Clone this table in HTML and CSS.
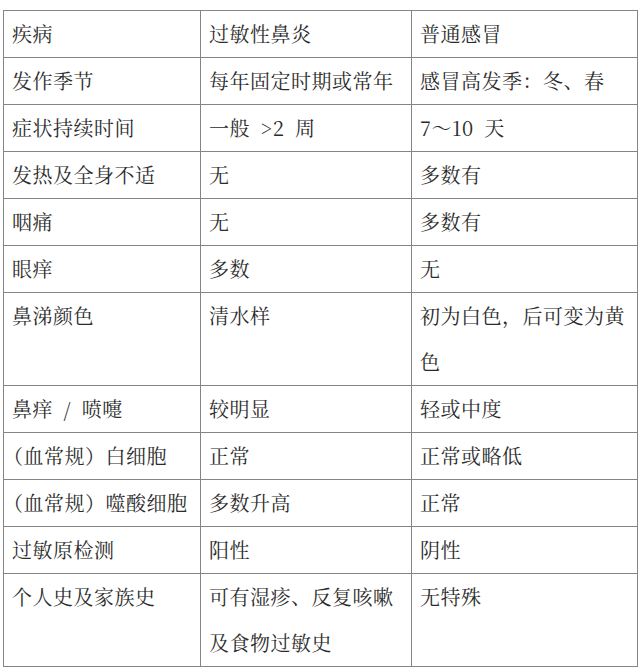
FILE: index.html
```html
<!DOCTYPE html>
<html lang="zh-CN">
<head>
<meta charset="utf-8">
<title>过敏性鼻炎与普通感冒</title>
<link rel="stylesheet" href="styles.css">
</head>
<body>
<table class="cmp">
  <colgroup>
    <col class="c1"><col class="c2"><col class="c3">
  </colgroup>
  <tbody>
    <tr><td>疾病</td><td>过敏性鼻炎</td><td>普通感冒</td></tr>
    <tr><td>发作季节</td><td>每年固定时期或常年</td><td>感冒高发季：冬、春</td></tr>
    <tr><td>症状持续时间</td><td>一般 &gt;2 周</td><td>7～10 天</td></tr>
    <tr><td>发热及全身不适</td><td>无</td><td>多数有</td></tr>
    <tr><td>咽痛</td><td>无</td><td>多数有</td></tr>
    <tr><td>眼痒</td><td>多数</td><td>无</td></tr>
    <tr><td>鼻涕颜色</td><td>清水样</td><td>初为白色，后可变为黄<br>色</td></tr>
    <tr><td>鼻痒 / 喷嚏</td><td>较明显</td><td>轻或中度</td></tr>
    <tr><td><span class="lead-paren">（</span>血常规）白细胞</td><td>正常</td><td>正常或略低</td></tr>
    <tr><td><span class="lead-paren">（</span>血常规）噬酸细胞</td><td>多数升高</td><td>正常</td></tr>
    <tr><td>过敏原检测</td><td>阳性</td><td>阴性</td></tr>
    <tr><td>个人史及家族史</td><td>可有湿疹、反复咳嗽<br>及食物过敏史</td><td>无特殊</td></tr>
  </tbody>
</table>
</body>
</html>
```
FILE: styles.css
```css
html, body {
  margin: 0;
  padding: 0;
  background: #ffffff;
}
body {
  padding: 10px 0 0 3px;
}
.cmp {
  border-collapse: collapse;
  table-layout: fixed;
  width: 634px;
  font-family: "Noto Serif CJK SC", "Liberation Serif", "Noto Sans CJK SC", serif;
  font-size: 20px;
  letter-spacing: 0.5px;
  word-spacing: 5px;
  color: #2b2b2b;
}
.c1 { width: 197px; }
.c2 { width: 211px; }
.c3 { width: 226px; }
.cmp td {
  border: 1px solid #858585;
  padding: 0 4px 0 8px;
  line-height: 46px;
  vertical-align: top;
  white-space: nowrap;
  overflow: hidden;
}
.lead-paren {
  display: inline-block;
  margin-left: -9px;
}
```
